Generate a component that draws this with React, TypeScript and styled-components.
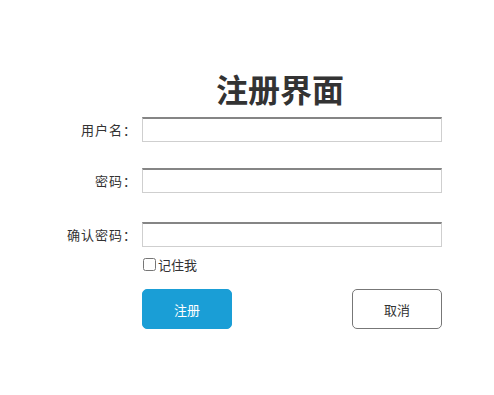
import styled, { createGlobalStyle } from 'styled-components';

const GlobalStyle = createGlobalStyle`
  html, body {
    margin: 0;
    padding: 0;
    background: #fff;
    font-family: "Noto Sans CJK SC", "Noto Sans", sans-serif;
    color: #333;
  }
`;

function App() {
  return (
    <Page>
      <GlobalStyle />
      <Title>注册界面</Title>
      <Form>
        <Row $top={0}>
          <Label>用户名：</Label>
          <Input type="text" />
        </Row>
        <Row $top={26}>
          <Label>密码：</Label>
          <Input type="password" />
        </Row>
        <Row $top={29}>
          <Label>确认密码：</Label>
          <Input type="password" />
        </Row>
        <Remember>
          <Check type="checkbox" />
          <span>记住我</span>
        </Remember>
        <Actions>
          <Button $primary>注册</Button>
          <Button>取消</Button>
        </Actions>
      </Form>
    </Page>
  );
}
export default App;

const Page = styled.div`
  width: 494px;
  height: 395px;
  padding-top: 68px;
  box-sizing: border-box;
`;

const Title = styled.h1`
  margin: 0;
  padding-left: 66px;
  text-align: center;
  font-size: 32px;
  line-height: 40px;
  font-weight: 700;
  color: #333;
`;

const Form = styled.div`
  margin-top: 9px;
  display: flex;
  flex-direction: column;
`;

const Row = styled.div<{ $top: number }>`
  display: flex;
  align-items: center;
  margin-top: ${(p) => p.$top}px;
`;

const Label = styled.label`
  width: 137px;
  text-align: right;
  font-size: 13px;
  letter-spacing: 1px;
  color: #333;
  margin-right: 5px;
`;

const Input = styled.input`
  width: 300px;
  height: 25px;
  box-sizing: border-box;
  margin: 0;
  border: 1px solid #cfcfcf;
  border-top: 2px solid #858585;
  outline: none;
  padding: 0 4px;
  font-size: 13px;
`;

const Remember = styled.label`
  display: flex;
  align-items: center;
  margin: 8px 0 0 142px;
  height: 18px;
  font-size: 13px;
  color: #333;
`;

const Check = styled.input`
  width: 13px;
  height: 13px;
  margin: 0 2px 0 1px;
`;

const Actions = styled.div`
  width: 300px;
  margin: 16px 0 0 142px;
  display: flex;
  justify-content: space-between;
`;

const Button = styled.button<{ $primary?: boolean }>`
  width: 90px;
  height: 40px;
  box-sizing: border-box;
  font-family: inherit;
  font-size: 13px;
  cursor: pointer;
  border-radius: 5px;
  border: 1px solid ${(p) => (p.$primary ? '#1a9ed6' : '#777')};
  background: ${(p) => (p.$primary ? '#1a9ed6' : '#fff')};
  color: ${(p) => (p.$primary ? '#fff' : '#333')};
`;
